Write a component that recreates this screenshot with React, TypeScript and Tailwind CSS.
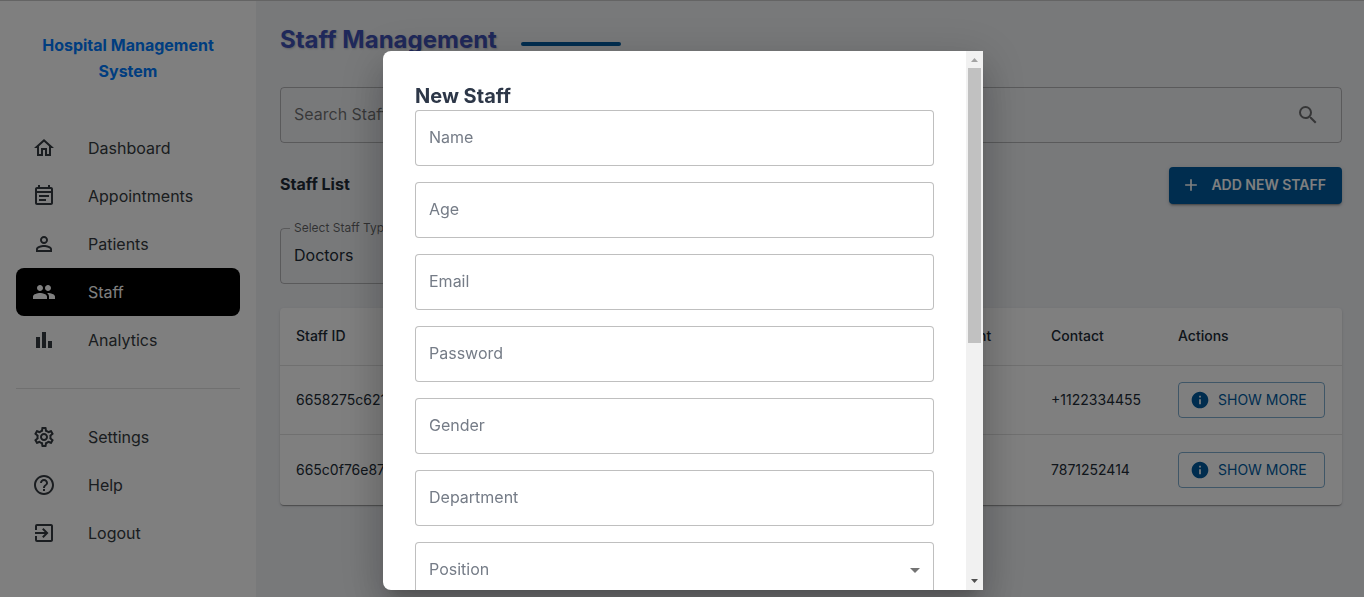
import type { ReactNode } from 'react';
import {
  MdAdd,
  MdArrowDropDown,
  MdBarChart,
  MdExitToApp,
  MdHelpOutline,
  MdInfo,
  MdOutlineEventNote,
  MdOutlineHome,
  MdOutlineSettings,
  MdPeople,
  MdPersonOutline,
  MdSearch,
} from 'react-icons/md';

type NavItem = { label: string; icon: ReactNode; active?: boolean };

const mainNav: NavItem[] = [
  { label: 'Dashboard', icon: <MdOutlineHome /> },
  { label: 'Appointments', icon: <MdOutlineEventNote /> },
  { label: 'Patients', icon: <MdPersonOutline /> },
  { label: 'Staff', icon: <MdPeople />, active: true },
  { label: 'Analytics', icon: <MdBarChart /> },
];

const extraNav: NavItem[] = [
  { label: 'Settings', icon: <MdOutlineSettings /> },
  { label: 'Help', icon: <MdHelpOutline /> },
  { label: 'Logout', icon: <MdExitToApp /> },
];

const staff = [
  { id: '6658275c6211', name: 'John Smith', email: 'john@mail.com', department: 'Heart', contact: '+1122334455' },
  { id: '665c0f76e87b', name: 'Anna Jones', email: 'anna@mail.com', department: 'Skin', contact: '7871252414' },
];

const fields = [
  { label: 'Name', type: 'text' },
  { label: 'Age', type: 'text' },
  { label: 'Email', type: 'email' },
  { label: 'Password', type: 'password' },
  { label: 'Gender', type: 'text' },
  { label: 'Department', type: 'text' },
];

function NavList({ items }: { items: NavItem[] }) {
  return (
    <ul>
      {items.map((item) => (
        <li key={item.label}>
          <a
            href="#"
            className={
              item.active
                ? 'flex h-12 items-center gap-8 rounded-lg bg-black px-4 text-white'
                : 'flex h-12 items-center gap-8 rounded-lg px-4 text-[#343a40]'
            }
          >
            <span className="text-2xl">{item.icon}</span>
            <span>{item.label}</span>
          </a>
        </li>
      ))}
    </ul>
  );
}

function Sidebar() {
  return (
    <aside className="w-64 shrink-0 bg-white px-4 pt-[31px]">
      <h1 className="px-4 text-center text-base leading-[26px] font-bold text-[#007bff]">
        Hospital Management System
      </h1>
      <nav className="pt-10">
        <NavList items={mainNav} />
        <hr className="my-6 border-black/12" />
        <NavList items={extraNav} />
      </nav>
    </aside>
  );
}

function StaffTable() {
  const head = 'px-4 text-left font-medium';
  return (
    <table className="mt-6 w-full table-fixed overflow-hidden rounded bg-white text-sm text-[#212b36] shadow-[0_2px_1px_-1px_rgba(0,0,0,0.2),0_1px_1px_rgba(0,0,0,0.14),0_1px_3px_rgba(0,0,0,0.12)]">
      <colgroup>
        <col className="w-[22%]" />
        <col className="w-[18%]" />
        <col className="w-[18%]" />
        <col />
        <col className="w-[127px]" />
        <col className="w-[180px]" />
      </colgroup>
      <thead>
        <tr className="h-[57px] border-b border-[#e0e0e0]">
          <th className={head}>Staff ID</th>
          <th className={head}>Name</th>
          <th className={head}>Email</th>
          <th className={head}>Department</th>
          <th className={head}>Contact</th>
          <th className={head}>Actions</th>
        </tr>
      </thead>
      <tbody>
        {staff.map((s) => (
          <tr key={s.id} className="h-[69px] border-b border-[#e0e0e0] last:h-[71px] last:border-b-0">
            <td className="px-4">{s.id}</td>
            <td className="px-4">{s.name}</td>
            <td className="px-4">{s.email}</td>
            <td className="px-4">{s.department}</td>
            <td className="px-4">{s.contact}</td>
            <td className="pr-[17px] pl-4">
              <button
                type="button"
                className="flex h-9 w-full items-center gap-2 rounded border border-[#005b9f]/50 pl-[11px] whitespace-nowrap text-[#005b9f]"
              >
                <MdInfo className="text-xl" />
                SHOW MORE
              </button>
            </td>
          </tr>
        ))}
      </tbody>
    </table>
  );
}

function StaffPage() {
  return (
    <main className="flex-1 bg-[#f0f2f5] px-6 pt-[21px] pr-[22px]">
      <div className="flex items-center gap-6">
        <h2 className="text-2xl leading-9 font-bold text-[#3f51b5] [text-shadow:1px_1px_2px_rgba(0,0,0,0.2)]">
          Staff Management
        </h2>
        <span className="mt-2 h-1 w-[100px] rounded-sm bg-[#005b9f]" />
      </div>

      <form className="mt-[29px] flex h-14 items-center rounded border border-black/25 pr-[21px] pl-[13px]">
        <input
          type="text"
          aria-label="Search Staff"
          placeholder="Search Staff"
          className="h-full flex-1 bg-transparent pb-0.5 placeholder:text-black/55 focus:outline-none"
        />
        <button type="button" aria-label="Search" className="text-2xl text-black/55">
          <MdSearch />
        </button>
      </form>

      <div className="mt-6 flex items-center justify-between">
        <h3 className="pb-1 text-base font-bold text-[#212b36]">Staff List</h3>
        <button
          type="button"
          className="flex h-[37px] items-center gap-2.5 rounded bg-[#005b9f] pr-4 pb-0.5 pl-3 text-sm font-semibold text-white shadow-[0_3px_1px_-2px_rgba(0,0,0,0.2),0_2px_2px_rgba(0,0,0,0.14),0_1px_5px_rgba(0,0,0,0.12)]"
        >
          <MdAdd className="text-xl" />
          ADD NEW STAFF
        </button>
      </div>

      <fieldset className="mt-4 h-16 w-60 rounded border border-black/25 px-[9px]">
        <legend className="px-1 text-xs leading-4 text-black/60">
          <label htmlFor="staff-type">Select Staff Type</label>
        </legend>
        <select id="staff-type" className="h-[38px] w-full appearance-none bg-transparent px-1 text-[#212b36]">
          <option>Doctors</option>
          <option>Nurses</option>
        </select>
      </fieldset>

      <StaffTable />
    </main>
  );
}

function ScrollBar() {
  return (
    <div aria-hidden="true" className="flex w-[17px] shrink-0 flex-col items-center bg-[#f1f1f1]">
      <svg viewBox="0 0 17 17" className="size-[17px]">
        <path d="M5 11h7L8.500 7z" fill="#a3a3a3" />
      </svg>
      <div className="h-[275px] w-[13px] bg-[#c1c1c1]" />
      <svg viewBox="0 0 17 17" className="mt-auto size-[17px]">
        <path d="M5 6h7L8.500 10z" fill="#505050" />
      </svg>
    </div>
  );
}

function NewStaffDialog() {
  const box = 'h-14 w-full shrink-0 rounded border border-black/25 bg-white px-[13px] pb-0.5';
  return (
    <div className="fixed inset-0 flex justify-center bg-black/50 pt-[51px] pb-[7px] pl-0.5">
      <div
        role="dialog"
        aria-labelledby="new-staff-title"
        className="flex w-[600px] overflow-hidden rounded-l-lg bg-white shadow-[0_11px_15px_-7px_rgba(0,0,0,0.2),0_24px_38px_3px_rgba(0,0,0,0.14),0_9px_46px_8px_rgba(0,0,0,0.12)]"
      >
        <form className="flex flex-1 flex-col overflow-hidden px-8 pt-8">
          <h2 id="new-staff-title" className="text-xl leading-[27px] font-bold text-[#2d3748]">
            New Staff
          </h2>
          <div className="flex flex-col gap-4">
            {fields.map((f) => (
              <input
                key={f.label}
                type={f.type}
                aria-label={f.label}
                placeholder={f.label}
                className={`${box} placeholder:text-[#757c87]`}
              />
            ))}
            <div className="relative">
              <select aria-label="Position" className={`${box} appearance-none text-[#757c87]`}>
                <option>Position</option>
              </select>
              <MdArrowDropDown className="pointer-events-none absolute top-4 right-[7px] text-2xl text-black/55" />
            </div>
          </div>
        </form>
        <ScrollBar />
      </div>
    </div>
  );
}

export default function App() {
  return (
    <div className="flex min-h-screen border-t border-[#c8c8c8] bg-white font-[Inter,sans-serif] text-base">
      <Sidebar />
      <StaffPage />
      <NewStaffDialog />
    </div>
  );
}
